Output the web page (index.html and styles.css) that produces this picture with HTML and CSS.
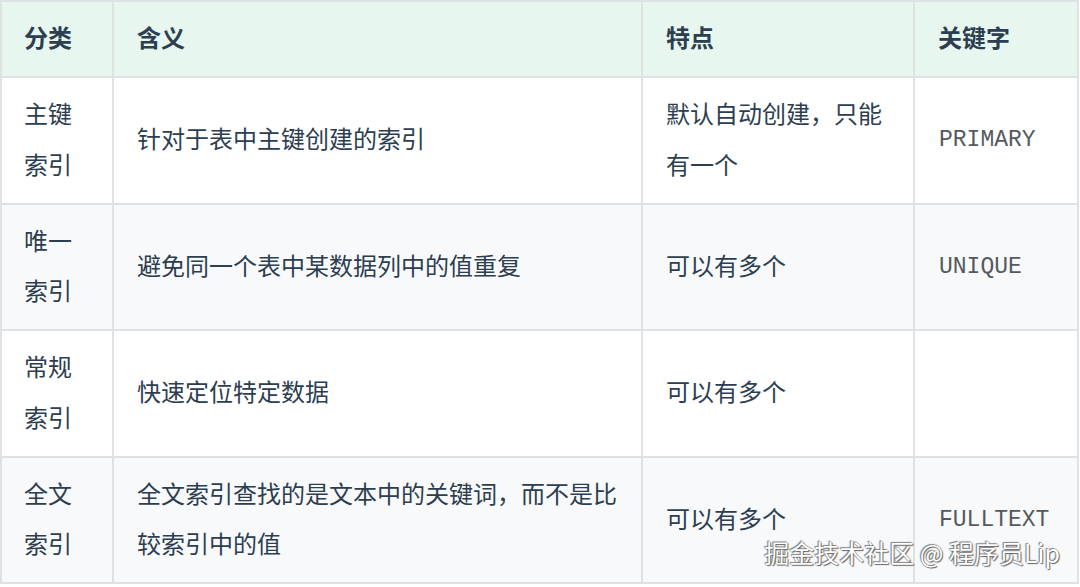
FILE: index.html
```html
<!DOCTYPE html>
<html lang="zh-CN">
<head>
<meta charset="utf-8">
<link rel="stylesheet" href="styles.css">
</head>
<body>
<div class="page">
  <table class="idx">
    <colgroup>
      <col class="c1"><col class="c2"><col class="c3"><col class="c4">
    </colgroup>
    <thead>
      <tr><th>分类</th><th>含义</th><th>特点</th><th>关键字</th></tr>
    </thead>
    <tbody>
      <tr><td>主键索引</td><td>针对于表中主键创建的索引</td><td>默认自动创建，只能有一个</td><td><code>PRIMARY</code></td></tr>
      <tr><td>唯一索引</td><td>避免同一个表中某数据列中的值重复</td><td>可以有多个</td><td><code>UNIQUE</code></td></tr>
      <tr><td>常规索引</td><td>快速定位特定数据</td><td>可以有多个</td><td></td></tr>
      <tr><td>全文索引</td><td>全文索引查找的是文本中的关键词，而不是比较索引中的值</td><td>可以有多个</td><td><code>FULLTEXT</code></td></tr>
    </tbody>
  </table>
  <div class="mark">掘金技术社区 @ 程序员Lip</div>
</div>
</body>
</html>
```

FILE: styles.css
```css
html, body {
  margin: 0;
  padding: 0;
  background: #ffffff;
}
.page {
  position: relative;
  width: 1080px;
  height: 587px;
  overflow: hidden;
  font-family: "Noto Sans CJK SC", "Noto Sans", sans-serif;
  color: #2c3e50;
}
.idx {
  border-collapse: collapse;
  table-layout: fixed;
  width: 1077px;
  font-size: 24px;
  line-height: 50.25px;
}
.c1 { width: 112px; }
.c2 { width: 529px; }
.c3 { width: 272px; }
.c4 { width: 164px; }
.idx th, .idx td {
  border: 2px solid #dfe2e5;
  padding: 10px 23px 14px 23px;
  text-align: left;
  vertical-align: middle;
}
.idx th:first-child, .idx td:first-child {
  padding-left: 22px;
}
.idx th {
  font-weight: 700;
  background: #e7f6ef;
}
.idx tbody tr:nth-child(even) td {
  background: #f8f9fa;
}
.idx code {
  font-family: "Liberation Mono", monospace;
  font-size: 23px;
  color: #555a60;
  padding-left: 1px;
}
.mark {
  position: absolute;
  right: 20px;
  bottom: 18px;
  font-size: 25px;
  line-height: 34px;
  color: #ffffff;
  text-shadow: 0 0 1px #555, 1px 1px 1px #666, -1px -1px 1px #888;
  white-space: nowrap;
}
```
